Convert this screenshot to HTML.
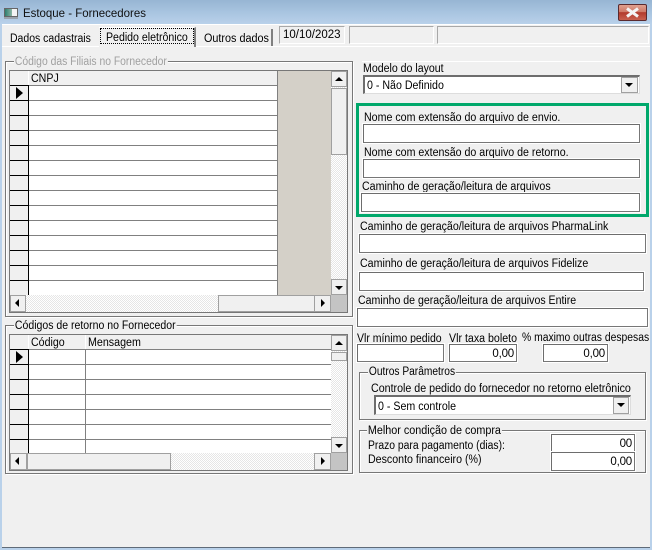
<!DOCTYPE html>
<html><head><meta charset="utf-8">
<style>
html,body{margin:0;padding:0}
body{width:652px;height:550px;overflow:hidden;position:relative;background:#f0f0f0;font-family:"Liberation Sans",sans-serif;font-size:11.5px;color:#000}
div,span.a{position:absolute;box-sizing:border-box}
.t{white-space:nowrap;line-height:13px;height:13px;margin-top:1px;transform:scaleX(.925);transform-origin:left top}
.in{background:#fff;border:1px solid #6d6d6d;border-right-color:#777;border-bottom-color:#777;text-align:right;line-height:18px;padding-right:2px;box-shadow:0 0 0 1px #fff;letter-spacing:-.2px}
.g{border:1px solid #777;box-shadow:inset 1px 1px 0 #fff,1px 1px 0 #fff}
.leg{background:#f0f0f0;padding:0 1px;white-space:nowrap;line-height:13px;height:13px;margin-top:1px;transform:scaleX(.91);transform-origin:left top}
.btn{background:#f0f0f0;border:1px solid #a0a0a0}
.dither{background-color:#fff;background-image:linear-gradient(45deg,#e6e6e6 25%,transparent 25%,transparent 75%,#e6e6e6 75%),linear-gradient(45deg,#e6e6e6 25%,transparent 25%,transparent 75%,#e6e6e6 75%);background-size:2px 2px;background-position:0 0,1px 1px}
.up{width:0;height:0;border-left:4px solid transparent;border-right:4px solid transparent;border-bottom:4px solid #000}
.dn{width:0;height:0;border-left:4px solid transparent;border-right:4px solid transparent;border-top:4px solid #000}
.lf{width:0;height:0;border-top:4px solid transparent;border-bottom:4px solid transparent;border-right:4px solid #000}
.rt{width:0;height:0;border-top:4px solid transparent;border-bottom:4px solid transparent;border-left:4px solid #000}
.ptr{width:0;height:0;border-top:6px solid transparent;border-bottom:6px solid transparent;border-left:7px solid #000}
.box{background:#f0f0f0;border:1px solid #a8a8a8}
</style></head><body>
<!-- window frame -->
<div style="left:0;top:0;width:652px;height:24px;background:linear-gradient(180deg,#97b5d3 0%,#a8c4e0 50%,#b9d1ea 100%)"></div>
<div style="left:0;top:24px;width:2px;height:526px;background:#b9d1ea"></div>
<div style="left:650px;top:24px;width:2px;height:526px;background:#b9d1ea"></div>
<div style="left:0;top:547px;width:652px;height:3px;background:#b9d1ea"></div>
<div style="left:2px;top:547px;width:648px;height:1px;background:#5f6b78"></div>
<div style="left:2px;top:24px;width:648px;height:1px;background:#fff"></div>
<!-- app icon -->
<div style="left:4px;top:8px;width:14px;height:9px;background:linear-gradient(90deg,#2f7d6e,#8fb8a8 60%,#f4f4f4 60%);border:1px solid #666"></div>
<div style="left:4px;top:17px;width:14px;height:2px;background:#9aa3ad"></div>
<div class="t" style="left:23px;top:6px;font-size:12px;color:#111;transform:scaleX(.955)">Estoque - Fornecedores</div>
<!-- close button -->
<div style="left:618px;top:4px;width:29px;height:17px;border:1px solid #5a2a2e;border-radius:2px;background:linear-gradient(180deg,#dfa08f 0%,#cf7a68 45%,#b23a2c 50%,#c8604e 100%)"></div>
<svg style="position:absolute;left:625px;top:7px" width="15" height="11" viewBox="0 0 15 11"><path d="M2 1.5L13 9.5M13 1.5L2 9.5" stroke="#f4f4f4" stroke-width="3"/></svg>
<!-- tabs -->
<div style="left:2px;top:46px;width:648px;height:1px;background:#fff"></div>
<div class="t" style="left:10px;top:32px;transform:scaleX(.91)">Dados cadastrais</div>
<div style="left:99px;top:27px;width:97px;height:20px;background:#f0f0f0;border-top:1px solid #fff;border-right:2px solid #808080"></div>
<div style="left:100px;top:28px;width:94px;height:16px;border:1px dotted #000"></div>
<div class="t" style="left:106px;top:31px;transform:scaleX(.92)">Pedido eletrônico</div>
<div style="left:271px;top:29px;width:2px;height:17px;background:#808080"></div>
<div class="t" style="left:204px;top:32px;transform:scaleX(.94)">Outros dados</div>
<!-- date/status -->
<div class="box" style="left:279px;top:26px;width:66px;height:18px;border-right-color:#fff;border-bottom-color:#fff"></div>
<div class="t" style="left:283px;top:28px;transform:none">10/10/2023</div>
<div class="box" style="left:349px;top:26px;width:85px;height:18px;border-right-color:#fff;border-bottom-color:#fff"></div>
<div class="box" style="left:437px;top:26px;width:212px;height:18px;border-right-color:#fff;border-bottom-color:#fff"></div>

<!-- group 1 -->
<div class="g" style="left:5px;top:61px;width:348px;height:256px"></div>
<div class="leg" style="left:14px;top:55px;color:#a0a0a0;transform:scaleX(.9)">Código das Filiais no Fornecedor</div>
<div style="left:9px;top:70px;width:339px;height:243px;border:1px solid #777;background:#f0f0f0"></div>
<!-- grid1 body -->
<div style="left:28px;top:71px;width:250px;height:224px;background:#fff"></div>
<div style="left:10px;top:71px;width:268px;height:14px;background:#f0f0f0"></div>
<div style="left:10px;top:85px;width:268px;height:210px;background:repeating-linear-gradient(180deg,#808080 0,#808080 1px,transparent 1px,transparent 15px)"></div>
<div style="left:10px;top:85px;width:18px;height:210px;background:#f0f0f0 repeating-linear-gradient(180deg,#000 0,#000 1px,#f0f0f0 1px,#f0f0f0 15px)"></div>
<div style="left:28px;top:85px;width:1px;height:210px;background:#000"></div>
<div style="left:28px;top:71px;width:1px;height:14px;background:#fff"></div>
<div style="left:277px;top:71px;width:1px;height:224px;background:#808080"></div>
<div class="t" style="left:31px;top:72px">CNPJ</div>
<div class="ptr" style="left:16px;top:87px"></div>
<div style="left:278px;top:71px;width:53px;height:224px;background:#d4d0c8"></div>
<!-- grid1 vscroll -->
<div class="dither" style="left:331px;top:71px;width:16px;height:224px"></div>
<div class="btn" style="left:331px;top:71px;width:16px;height:16px"></div>
<div class="up" style="left:335px;top:77px"></div>
<div class="btn" style="left:331px;top:88px;width:16px;height:67px"></div>
<div class="btn" style="left:331px;top:279px;width:16px;height:16px"></div>
<div class="dn" style="left:335px;top:286px"></div>
<!-- grid1 hscroll -->
<div class="dither" style="left:10px;top:295px;width:321px;height:17px"></div>
<div class="btn" style="left:10px;top:295px;width:16px;height:17px"></div>
<div class="lf" style="left:15px;top:299px"></div>
<div class="btn" style="left:218px;top:295px;width:97px;height:17px"></div>
<div class="btn" style="left:314px;top:295px;width:17px;height:17px"></div>
<div class="rt" style="left:321px;top:299px"></div>
<div style="left:331px;top:295px;width:16px;height:17px;background:#c4c4c4"></div>

<!-- group 2 -->
<div class="g" style="left:5px;top:325px;width:348px;height:149px"></div>
<div class="leg" style="left:14px;top:319px;transform:scaleX(.914)">Códigos de retorno no Fornecedor</div>
<div style="left:9px;top:334px;width:339px;height:137px;border:1px solid #777;background:#f0f0f0"></div>
<div style="left:28px;top:349px;width:303px;height:104px;background:#fff"></div>
<div style="left:10px;top:349px;width:321px;height:104px;background:repeating-linear-gradient(180deg,#808080 0,#808080 1px,transparent 1px,transparent 15px)"></div>
<div style="left:10px;top:349px;width:18px;height:104px;background:#f0f0f0 repeating-linear-gradient(180deg,#000 0,#000 1px,#f0f0f0 1px,#f0f0f0 15px)"></div>
<div style="left:28px;top:349px;width:1px;height:104px;background:#000"></div>
<div style="left:85px;top:349px;width:1px;height:104px;background:#808080"></div>
<div style="left:28px;top:335px;width:1px;height:14px;background:#fff"></div>
<div style="left:85px;top:335px;width:1px;height:14px;background:#fff"></div>
<div class="t" style="left:31px;top:336px">Código</div>
<div class="t" style="left:88px;top:336px;transform:scaleX(.93)">Mensagem</div>
<div class="ptr" style="left:16px;top:351px"></div>
<!-- grid2 vscroll -->
<div class="dither" style="left:331px;top:335px;width:16px;height:118px"></div>
<div class="btn" style="left:331px;top:335px;width:16px;height:16px"></div>
<div class="up" style="left:335px;top:341px"></div>
<div class="btn" style="left:331px;top:352px;width:16px;height:9px"></div>
<div class="btn" style="left:331px;top:437px;width:16px;height:16px"></div>
<div class="dn" style="left:335px;top:444px"></div>
<!-- grid2 hscroll -->
<div class="dither" style="left:10px;top:453px;width:321px;height:17px"></div>
<div class="btn" style="left:10px;top:453px;width:17px;height:17px"></div>
<div class="lf" style="left:15px;top:457px"></div>
<div class="btn" style="left:27px;top:453px;width:144px;height:17px"></div>
<div class="btn" style="left:314px;top:453px;width:17px;height:17px"></div>
<div class="rt" style="left:321px;top:457px"></div>
<div style="left:331px;top:453px;width:16px;height:17px;background:#c4c4c4"></div>

<!-- right column -->
<div style="left:362px;top:61px;width:278px;height:1px;background:#fff"></div>
<div class="t" style="left:363px;top:62px;transform:scaleX(.92)">Modelo do layout</div>
<div style="left:363px;top:75px;width:277px;height:19px;background:#fff;border:1px solid #6d6d6d;border-right-color:#ddd;border-bottom-color:#ddd;border-top-width:2px;border-left-width:2px"></div>
<div class="t" style="left:367px;top:79px">0 - Não Definido</div>
<div class="btn" style="left:621px;top:77px;width:17px;height:16px"></div>
<div class="dn" style="left:625px;top:83px"></div>

<div style="left:356px;top:103px;width:293px;height:114px;border:3px solid #00a86b"></div>
<div class="t" style="left:364px;top:111px">Nome com extensão do arquivo de envio.</div>
<div class="in" style="left:363px;top:124px;width:277px;height:19px"></div>
<div class="t" style="left:364px;top:146px">Nome com extensão do arquivo de retorno.</div>
<div class="in" style="left:363px;top:159px;width:277px;height:19px"></div>
<div class="t" style="left:362px;top:180px">Caminho de geração/leitura de arquivos</div>
<div class="in" style="left:361px;top:193px;width:279px;height:19px"></div>

<div class="t" style="left:360px;top:220px">Caminho de geração/leitura de arquivos PharmaLink</div>
<div class="in" style="left:359px;top:234px;width:287px;height:19px"></div>
<div class="t" style="left:360px;top:257px">Caminho de geração/leitura de arquivos Fidelize</div>
<div class="in" style="left:359px;top:272px;width:285px;height:19px"></div>
<div class="t" style="left:358px;top:294px;transform:scaleX(.92)">Caminho de geração/leitura de arquivos Entire</div>
<div class="in" style="left:357px;top:308px;width:291px;height:19px"></div>

<div class="t" style="left:357px;top:332px;transform:scaleX(.913)">Vlr mínimo pedido</div>
<div class="in" style="left:357px;top:344px;width:87px;height:18px"></div>
<div class="t" style="left:449px;top:332px">Vlr taxa boleto</div>
<div class="in" style="left:449px;top:344px;width:68px;height:18px">0,00</div>
<div class="t" style="left:522px;top:331px;transform:scaleX(.9)">% maximo outras despesas</div>
<div class="in" style="left:543px;top:344px;width:65px;height:18px">0,00</div>

<div class="g" style="left:359px;top:372px;width:287px;height:48px"></div>
<div class="leg" style="left:368px;top:365px;transform:scaleX(.887)">Outros Parâmetros</div>
<div class="t" style="left:371px;top:382px;transform:scaleX(.928)">Controle de pedido do fornecedor no retorno eletrônico</div>
<div style="left:374px;top:395px;width:257px;height:20px;background:#fff;border:1px solid #6d6d6d;border-right-color:#ddd;border-bottom-color:#ddd;border-top-width:2px;border-left-width:2px"></div>
<div class="t" style="left:378px;top:400px">0 - Sem controle</div>
<div class="btn" style="left:613px;top:397px;width:16px;height:17px"></div>
<div class="dn" style="left:617px;top:403px"></div>

<div class="g" style="left:359px;top:430px;width:287px;height:43px"></div>
<div class="leg" style="left:367px;top:424px;transform:scaleX(.937)">Melhor condição de compra</div>
<div class="t" style="left:368px;top:439px;transform:scaleX(.9)">Prazo para pagamento (dias):</div>
<div class="t" style="left:368px;top:453px">Desconto financeiro (%)</div>
<div class="in" style="left:551px;top:434px;width:84px;height:19px">00</div>
<div class="in" style="left:551px;top:452px;width:84px;height:19px">0,00</div>
</body></html>
